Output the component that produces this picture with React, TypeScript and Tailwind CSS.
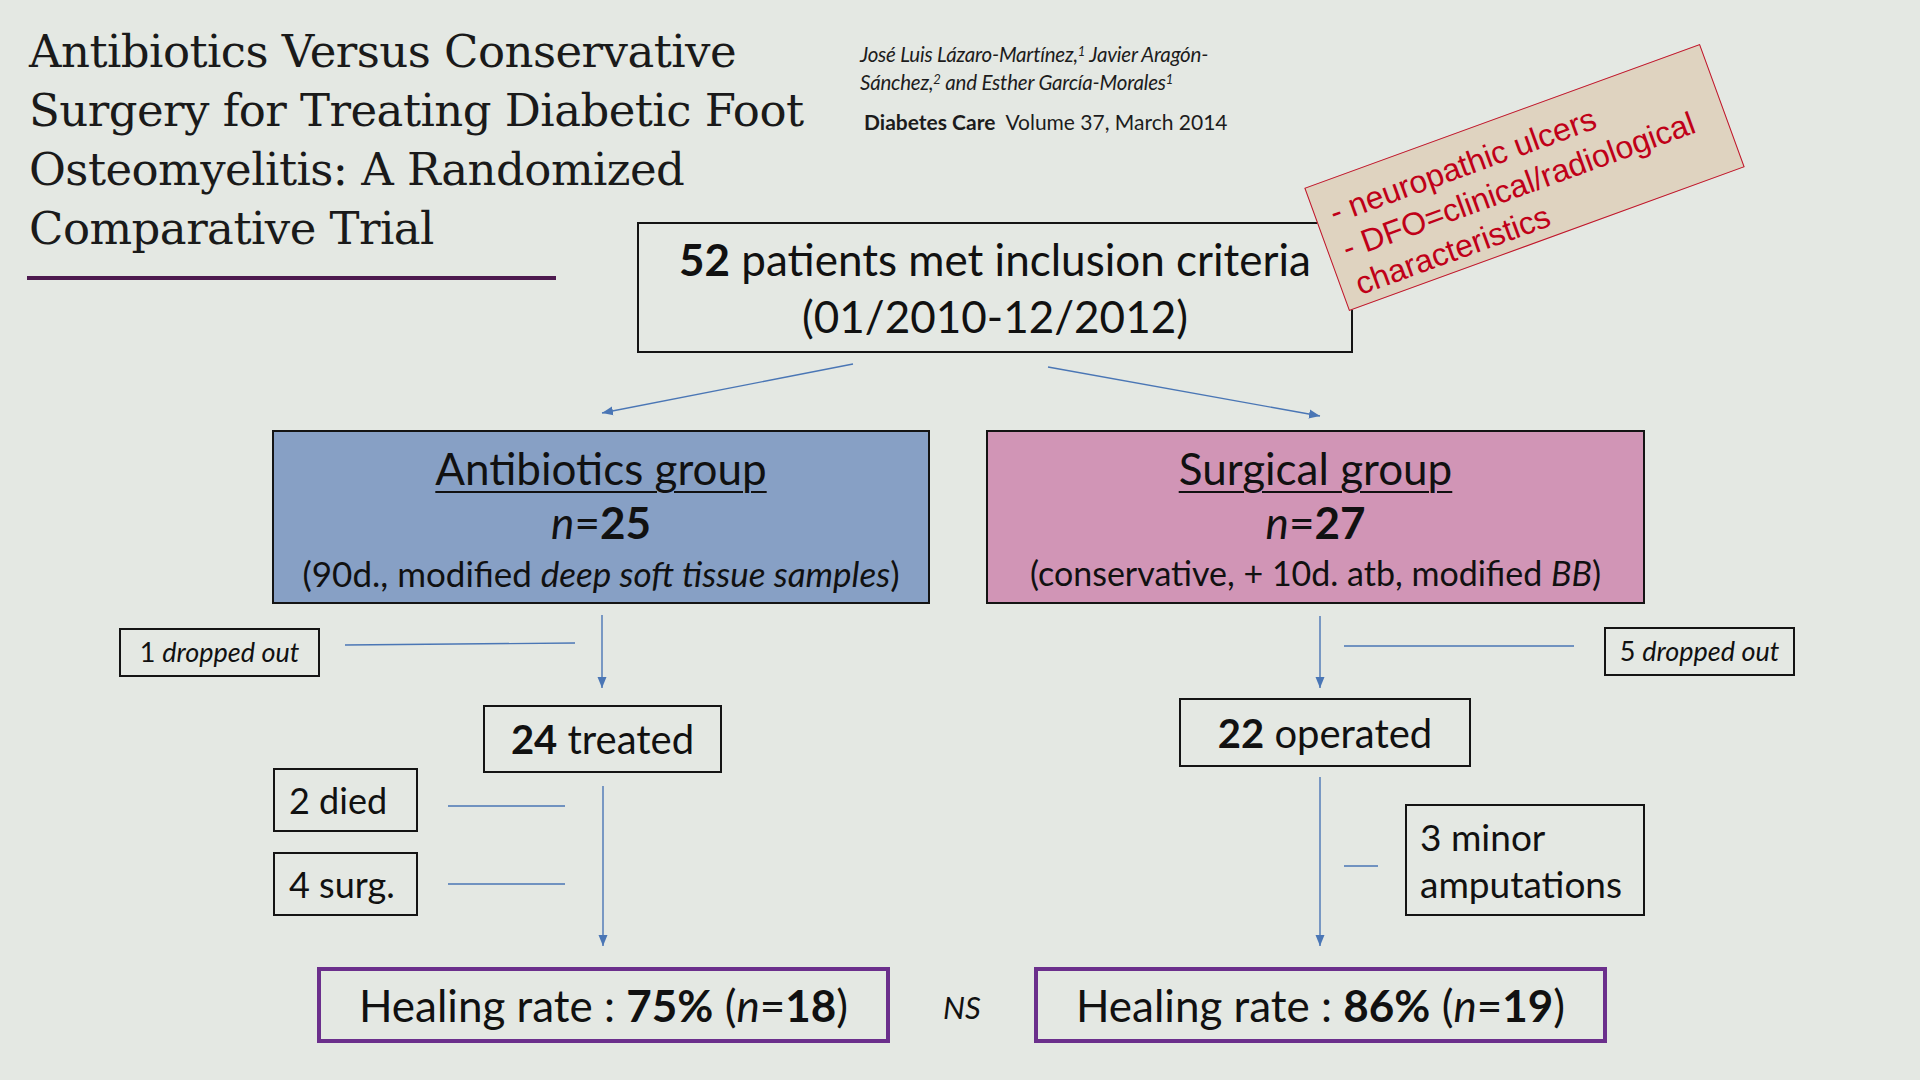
import React from 'react'

const ARROW = '#4a76b5'

const Line = ({ x1, y1, x2, y2, head = false }: { x1: number; y1: number; x2: number; y2: number; head?: boolean }) => (
  <line x1={x1} y1={y1} x2={x2} y2={y2} stroke={ARROW} strokeWidth={1.4} markerEnd={head ? 'url(#head)' : undefined} />
)

// connectors of the flow chart
const Connectors = () => (
  <svg className="absolute inset-0 pointer-events-none" width={1920} height={1080} viewBox="0 0 1920 1080">
    <defs>
      <marker id="head" markerUnits="userSpaceOnUse" markerWidth={12} markerHeight={10} refX={11} refY={5} orient="auto">
        <path d="M0,0.5 L11,5 L0,9.5 z" fill={ARROW} />
      </marker>
    </defs>
    <Line x1={853} y1={364} x2={602} y2={413} head />
    <Line x1={1048} y1={367} x2={1320} y2={416} head />
    <Line x1={602} y1={615} x2={602} y2={688} head />
    <Line x1={345} y1={645} x2={575} y2={643} />
    <Line x1={1320} y1={616} x2={1320} y2={688} head />
    <Line x1={1344} y1={646} x2={1574} y2={646} />
    <Line x1={603} y1={786} x2={603} y2={946} head />
    <Line x1={448} y1={806} x2={565} y2={806} />
    <Line x1={448} y1={884} x2={565} y2={884} />
    <Line x1={1320} y1={777} x2={1320} y2={946} head />
    <Line x1={1344} y1={866} x2={1378} y2={866} />
  </svg>
)

const GroupBox = ({
  className,
  title,
  n,
  detail,
  detailClass
}: {
  className: string
  title: string
  n: string
  detail: React.ReactNode
  detailClass: string
}) => (
  <div className={`absolute top-[430px] h-[174px] border-2 border-[#141414] flex flex-col items-center pt-[10px] text-[#111] ${className}`}>
    <div className="text-[44px] leading-[52px] underline decoration-2 underline-offset-[6px]">{title}</div>
    <div className="text-[44px] leading-[56px]">
      <i>n</i>=<b>{n}</b>
    </div>
    <div className={`leading-[46px] ${detailClass}`}>{detail}</div>
  </div>
)

export default function App() {
  return (
    <div className="relative w-[1920px] h-[1080px] overflow-hidden bg-[#e4e8e3] font-['Lato','Open_Sans',sans-serif] text-[#111]">
      {/* header */}
      <div className="flex">
        <div className="w-[860px] pl-[29px] pt-[22px]">
          <h1 className="font-['DejaVu_Serif',serif] text-[45px] leading-[59px] font-normal tracking-[-0.012em] text-[#1a1a1a]">
            Antibiotics Versus Conservative
            <br />
            Surgery for Treating Diabetic Foot
            <br />
            Osteomyelitis: A Randomized
            <br />
            Comparative Trial
          </h1>
          <div className="mt-[18px] -ml-[2px] w-[529px] h-[4px] bg-[#4d1a4f]" />
        </div>
        <div className="pt-[40px] text-[#1c1c1c]">
          <p className="italic text-[20.5px] leading-[28px] tracking-[-0.01em]">
            José Luis Lázaro-Martínez,<sup className="text-[13px]">1</sup> Javier Aragón-
            <br />
            Sánchez,<sup className="text-[13px]">2</sup> and Esther García-Morales<sup className="text-[13px]">1</sup>
          </p>
          <p className="mt-[12px] pl-[4px] text-[21px] leading-[28px]">
            <b>Diabetes Care</b>&nbsp;&nbsp;Volume 37, March 2014
          </p>
        </div>
      </div>

      <Connectors />

      {/* top box */}
      <div className="absolute left-[637px] top-[222px] w-[716px] h-[131px] border-2 border-[#141414] flex flex-col items-center justify-center text-[44px] leading-[57px]">
        <div>
          <b>52</b> patients met inclusion criteria
        </div>
        <div>(01/2010-12/2012)</div>
      </div>

      {/* inclusion note */}
      <div className="absolute left-[1314px] top-[112px] w-[421px] h-[131px] rotate-[-20deg] bg-[#dfd3c0] border-[1.5px] border-[#c0142b] pl-[15px] pt-[13px] font-['Liberation_Sans',Arial,sans-serif] text-[32px] leading-[38px] text-[#c00018]">
        <div>- neuropathic ulcers</div>
        <div>- DFO=clinical/radiological</div>
        <div>characteristics</div>
      </div>

      <GroupBox
        className="left-[272px] w-[658px] bg-[#87a0c5]"
        title="Antibiotics group"
        n="25"
        detailClass="text-[35px]"
        detail={
          <>
            (90d., modified <i>deep soft tissue samples</i>)
          </>
        }
      />
      <GroupBox
        className="left-[986px] w-[659px] bg-[#d195b6]"
        title="Surgical group"
        n="27"
        detailClass="text-[34px]"
        detail={
          <>
            (conservative, + 10d. atb, modified <i>BB</i>)
          </>
        }
      />

      {/* drop-outs */}
      <div className="absolute left-[119px] top-[628px] w-[201px] h-[49px] border-2 border-[#141414] flex items-center justify-center text-[27px]">
        <span>
          1 <i>dropped out</i>
        </span>
      </div>
      <div className="absolute left-[1604px] top-[627px] w-[191px] h-[49px] border-2 border-[#141414] flex items-center justify-center text-[27px]">
        <span>
          5 <i>dropped out</i>
        </span>
      </div>

      {/* second level */}
      <div className="absolute left-[483px] top-[705px] w-[239px] h-[68px] border-2 border-[#141414] flex items-center justify-center text-[40px]">
        <span>
          <b>24</b> treated
        </span>
      </div>
      <div className="absolute left-[1179px] top-[698px] w-[292px] h-[69px] border-2 border-[#141414] flex items-center justify-center text-[40px]">
        <span>
          <b>22</b> operated
        </span>
      </div>

      <div className="absolute left-[273px] top-[768px] w-[145px] h-[64px] border-2 border-[#141414] flex items-center pl-[14px] text-[36px]">
        2 died
      </div>
      <div className="absolute left-[273px] top-[852px] w-[145px] h-[64px] border-2 border-[#141414] flex items-center pl-[14px] text-[36px]">
        4 surg.
      </div>
      <div className="absolute left-[1405px] top-[804px] w-[240px] h-[112px] border-2 border-[#141414] flex flex-col justify-center pl-[13px] text-[37px] leading-[47px]">
        <div>3 minor</div>
        <div>amputations</div>
      </div>

      {/* outcome */}
      <div className="absolute left-[317px] top-[967px] w-[573px] h-[76px] border-4 border-[#6b2f8c] flex items-center justify-center text-[44px]">
        <span>
          Healing rate : <b>75%</b> (<i>n</i>=<b>18</b>)
        </span>
      </div>
      <div className="absolute left-[943px] top-[989px] italic text-[31px] leading-[36px]">NS</div>
      <div className="absolute left-[1034px] top-[967px] w-[573px] h-[76px] border-4 border-[#6b2f8c] flex items-center justify-center text-[44px]">
        <span>
          Healing rate : <b>86%</b> (<i>n</i>=<b>19</b>)
        </span>
      </div>
    </div>
  )
}
